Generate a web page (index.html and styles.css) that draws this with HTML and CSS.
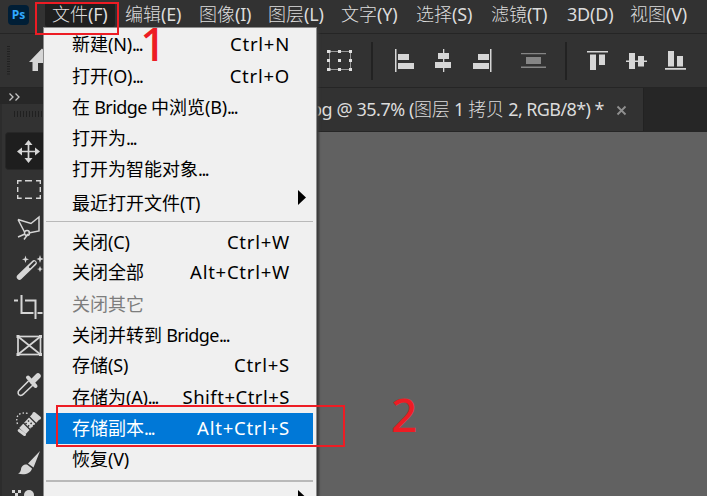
FILE: index.html
```
<!DOCTYPE html>
<html lang="zh-CN">
<head>
<meta charset="utf-8">
<title>Photoshop</title>
<link rel="stylesheet" href="styles.css">
</head>
<body>
<div class="app">
  <header class="menubar">
    <div class="logo">Ps</div>
    <div class="m active">文件<i>(F)</i></div>
    <div class="m">编辑<i>(E)</i></div>
    <div class="m">图像<i>(I)</i></div>
    <div class="m">图层<i>(L)</i></div>
    <div class="m">文字<i>(Y)</i></div>
    <div class="m">选择<i>(S)</i></div>
    <div class="m">滤镜<i>(T)</i></div>
    <div class="m"><i>3D(D)</i></div>
    <div class="m">视图<i>(V)</i></div>
  </header>
  <div class="options">
    <svg width="707" height="53" viewBox="0 34 707 53">
      <path d="M8.500 46v29" stroke="#202020" stroke-width="3" stroke-dasharray="1 1.5"/>
      <path d="M29 62 42 48.500 55 62H51V71H45V63H38V71H32.500V62Z" fill="#d6d6d6"/>
      <path d="M329 51.500h22M329 69.500h22M329.500 51v19M350.500 51v19" stroke="#969696" fill="none"/>
      <path d="M327 50h3.500v3H327zM338 50h3v3h-3zM349 50h3v3h-3zM327 59h3v3h-3zM338 59h3v3h-3zM349 59h3v3h-3zM327 68h3.500v3H327zM338 68h3v3h-3zM349 68h3v3h-3z" fill="#e0e0e0"/>
      <path d="M371 42h2v38h-2zM565 42h2v38h-2z" fill="#222"/>
      <g fill="#d6d6d6">
        <path d="M395 49h1.500v23H395zM398 54h11v6H398zM398 63h16v6H398z"/>
        <path d="M443 49h1.300v23H443zM438 53h11v6H438zM435 62h16v6H435z"/>
        <path d="M490 49h1.500v23H490zM478 54h11v6H478zM473 63h16v6H473z"/>
        <path d="M587 51h21v1.600H587zM590 54.500h6V70h-6zM599 54.500h6V65h-6z"/>
        <path d="M626 60.500h21v1.500H626zM629 53h6v16h-6zM638 56h6v10.500h-6z"/>
        <path d="M665 68h21v1.800H665zM668 51h6v15.500h-6zM677 56h6v10.500h-6z"/>
      </g>
      <path d="M521 53h25v1.300H521zM521 66.500h25V68H521zM526 57h15v7H526z" fill="#858585"/>
    </svg>
  </div>
  <div class="work">
    <aside class="tools">
      <div class="collapse"><svg width="16" height="10" viewBox="0 0 16 10"><path d="M1.500 1.500 5 5 1.500 8.500M7.500 1.500 11 5 7.500 8.500" fill="none" stroke="#c4c4c4" stroke-width="1.300"/></svg></div>
      <svg class="toolset" width="60" height="392" viewBox="0 104 60 392">
        <path d="M1 104v392" stroke="#262626"/>
        <path d="M14 114h40" stroke="#202020" stroke-width="6" stroke-dasharray="1 2"/>
        <rect x="5.500" y="132.500" width="50" height="37" rx="3" fill="#1e1e1e" stroke="#272727"/>
        <g fill="none" stroke="#d6d6d6" stroke-width="1.700">
          <path d="M28.500 143v17M20 151.500h17"/>
          <path d="M28.500 140 32.500 145H24.500ZM28.500 163 32.500 158H24.500ZM17 151.500 22 147.500V155.500ZM40 151.500 35 147.500V155.500Z" fill="#d6d6d6" stroke="none"/>
          <path d="M17.700 184v-3.300h4M25 180.700h7M36 180.700h4.300v3.300M40.300 187v5M17.700 187v5M17.700 195v3.300h4M25 198.300h7M36 198.300h4.300V195" stroke-width="1.400"/>
          <path d="M18 219.500 31 223.500 39 217V231L28.500 233M18 219.500 24.500 232M18 237 25 234M24 239.500 28 234" stroke-width="1.500"/>
          <circle cx="27" cy="233" r="2.500" stroke-width="1.400"/>
          <path d="M19.500 277 34 263" stroke-width="5.500" stroke-linecap="round"/>
          <path d="M30 267 34.500 262.500" stroke="#323232" stroke-width="2.300" stroke-linecap="round"/>
          <path d="M25.500 255.500 26.400 258.400 29 259.300 26.400 260.200 25.500 263 24.600 260.200 22 259.300 24.600 258.400ZM40 255 41 258 44 259 41 260 40 263 39 260 36.500 259 39 258ZM40 266 41 268.500 43 269 41 269.700 40 272 39 269.700 37 269 39 268.500Z" fill="#d6d6d6" stroke="none"/>
          <path d="M14 300.500h4M21.500 295v18h12M25 300.500h10.500V319M37.500 313h5" stroke-width="2"/>
          <rect x="18" y="336.500" width="22.500" height="18"/>
          <path d="M18 336.500 40.500 354.500M40.500 336.500 18 354.500"/>
          <path d="M16.500 335h3v3h-3zM39 335h3v3h-3zM16.500 353h3v3h-3zM39 353h3v3h-3z" fill="#d6d6d6" stroke="none"/>
          <path d="M28.500 381 19 390.500C17.500 392 18 395 20 395.300C22 396 23 394.500 24 393.500L33 385" stroke-width="1.600"/>
          <path d="M28 377.500 35.500 386" stroke-width="4" stroke-linecap="round"/>
          <path d="M32.500 381.500 38 376" stroke-width="5.500" stroke-linecap="round"/>
          <path d="M22.500 431 36.500 416" stroke-width="9"/>
          <path d="M19.200 430.500 24.500 434.500M34 413.500 39.500 418" stroke-width="3" stroke-linecap="round"/>
          <path d="M23 422.500 30.500 430M29 416.500 36.500 424" stroke="#323232" stroke-width="1.300"/>
          <path d="M25.500 423 32 429M28 420.500 34 426" stroke="#323232" stroke-width="1.500" stroke-dasharray="1.500 2"/>
          <path d="M17.500 424C15 416 19 411.500 28 413.500" stroke-width="1.400" stroke-dasharray="1.500 2"/>
          <path d="M40 451 33.500 467.500 28 463.500ZM27 464.500C23 464 21 467 21 469.500C20.500 472 19.500 473 18 473.500C24 475.500 31 473.500 32 468.500Z" fill="#d6d6d6" stroke="none"/>
          <circle cx="29" cy="495" r="5" fill="#d6d6d6" stroke="none"/>
          <path d="M12 490h3v3h-3zM18 490h3v3h-3zM15 493h3v3h-3z" fill="#d6d6d6" stroke="none"/>
        </g>
      </svg>
    </aside>
    <main class="document">
      <div class="tabs"><div class="tab"><span>pg @ 35.7% (</span>图层 <span>1</span> 拷贝 <span class="tail">2, RGB/8*) *</span><svg width="11" height="11" viewBox="0 0 11 11"><path d="M1.500 1.500 9.500 9.500M9.500 1.500 1.500 9.500" stroke="#909090" stroke-width="1.800"/></svg></div></div>
      <div class="canvas"></div>
    </main>
  </div>
</div>
<div class="dropdown">
  <div class="row h32"><span>新建<i>(N)</i><b>...</b></span><kbd>Ctrl+N</kbd></div>
  <div class="row"><span>打开<i>(O)</i><b>...</b></span><kbd>Ctrl+O</kbd></div>
  <div class="row"><span>在<i class="tight"> Bridge </i>中浏览<i>(B)</i><b>...</b></span></div>
  <div class="row"><span>打开为<b>...</b></span></div>
  <div class="row h32"><span>打开为智能对象<b>...</b></span></div>
  <div class="row recent"><span>最近打开文件<i>(T)</i></span><svg class="arrow" width="8" height="16"><path d="M0 0 8 7.500 0 15Z"/></svg></div>
  <hr>
  <div class="row h30"><span>关闭<i>(C)</i></span><kbd>Ctrl+W</kbd></div>
  <div class="row h30"><span>关闭全部</span><kbd>Alt+Ctrl+W</kbd></div>
  <div class="row h33 disabled"><span>关闭其它</span></div>
  <div class="row h30"><span>关闭并转到<i class="tight"> Bridge</i><b>...</b></span></div>
  <div class="row h30"><span>存储<i>(S)</i></span><kbd>Ctrl+S</kbd></div>
  <div class="row h33"><span>存储为<i>(A)</i><b>...</b></span><kbd class="long">Shift+Ctrl+S</kbd></div>
  <div class="row selected"><span>存储副本<b>...</b></span><kbd>Alt+Ctrl+S</kbd></div>
  <div class="row h29"><span>恢复<i>(V)</i></span></div>
  <hr class="thick">
  <div class="row last"><svg class="arrow" width="8" height="16"><path d="M0 0 8 7.500 0 15Z"/></svg></div>
</div>
<div class="mark first"></div>
<div class="mark second"></div>
<div class="number one">1</div>
<div class="number two">2</div>
</body>
</html>
```
FILE: styles.css
```
* { box-sizing: border-box; }
body {
  margin: 0;
  width: 707px;
  height: 496px;
  overflow: hidden;
  position: relative;
  background: #323232;
  font: 300 18px/24px "Noto Sans", "Noto Sans CJK SC", sans-serif;
  color: #dcdcdc;
}
i, b, kbd { font: inherit; font-weight: 400; }
i { letter-spacing: -0.2px; white-space: pre; }
i.tight { letter-spacing: -0.55px; }
b { letter-spacing: -1.4px; }
svg { display: block; flex: none; }
.app { display: flex; flex-direction: column; height: 496px; }
.menubar {
  display: grid;
  grid-template-columns: 52px 73px 74px 69px 73px 75px 75px 76px 63px 77px;
  height: 34px;
  padding-top: 2px;
  border-bottom: 1px solid #252525;
  flex: none;
}
.m { height: 25px; line-height: 24px; white-space: nowrap; }
.active { background: #1f1f1f; margin-left: -7px; padding-left: 7px; width: 70px; border-radius: 3px; }
.logo {
  width: 21px;
  height: 20px;
  margin: 3px 0 0 8px;
  border-radius: 4px;
  background: #001e36;
  color: #31a8ff;
  font: bold 12px/20px "Open Sans", sans-serif;
  text-align: center;
}
.options { height: 54px; border-bottom: 1px solid #252525; flex: none; }
.work { display: flex; flex: 1; min-height: 0; }
.tools { width: 60px; flex: none; }
.collapse { height: 16px; background: #272727; padding: 4px 0 0 8px; }
.document { flex: 1; min-width: 0; display: flex; flex-direction: column; }
.tabs { height: 44px; background: #262626; display: flex; flex: none; }
.tab {
  width: 584px;
  height: 43px;
  padding: 0 0 2px 251px;
  background: #323232;
  border-right: 1px solid #222;
  display: flex;
  align-items: center;
  white-space: pre;
  letter-spacing: -0.25px;
}
.tab span { font-weight: 400; letter-spacing: -0.45px; }
.tab .tail { letter-spacing: -0.6px; }
.tab svg { margin: 4px 0 0 12px; }
.canvas { flex: 1; background: #616161; }
.dropdown {
  position: absolute;
  left: 43px;
  top: 27px;
  width: 274px;
  height: 469px;
  overflow: hidden;
  padding: 0 3px 0 2px;
  border: 1px solid #8c8c8c;
  border-bottom: 0;
  background: #f0f0f0;
  box-shadow: 2px 2px 2px #3a3a3a;
  color: #000;
  font-weight: 400;
}
.row {
  height: 31px;
  padding: 0 23px 0 26px;
  display: flex;
  align-items: center;
  justify-content: space-between;
  white-space: nowrap;
}
kbd { font-size: 18.5px; letter-spacing: 0.75px; }
kbd.long { letter-spacing: 0.5px; }
.h29 { height: 29px; }
.h30 { height: 30px; }
.h32 { height: 32px; }
.h33 { height: 33px; }
.recent { height: 36px; }
.disabled { color: #7d7d7d; }
.selected { background: #0078d7; color: #fff; }
.selected > * { position: relative; top: -1px; }
.arrow { margin: -10px -16px 0 auto; }
.last { height: 41px; }
hr { height: 1px; margin: 0 0 5px; border: 0; background: #b9b9b9; }
.thick { height: 2px; margin: 7px 0 0; }
.mark { position: absolute; border: 2px solid #ed1c24; }
.first { left: 35px; top: 2px; width: 84px; height: 33px; }
.second { left: 56px; top: 405px; width: 289px; height: 42px; }
.number { position: absolute; color: #ed1c24; font-size: 46px; line-height: 50px; font-weight: 500; }
.one { left: 140px; top: 18px; }
.two { left: 391px; top: 389px; }
```
